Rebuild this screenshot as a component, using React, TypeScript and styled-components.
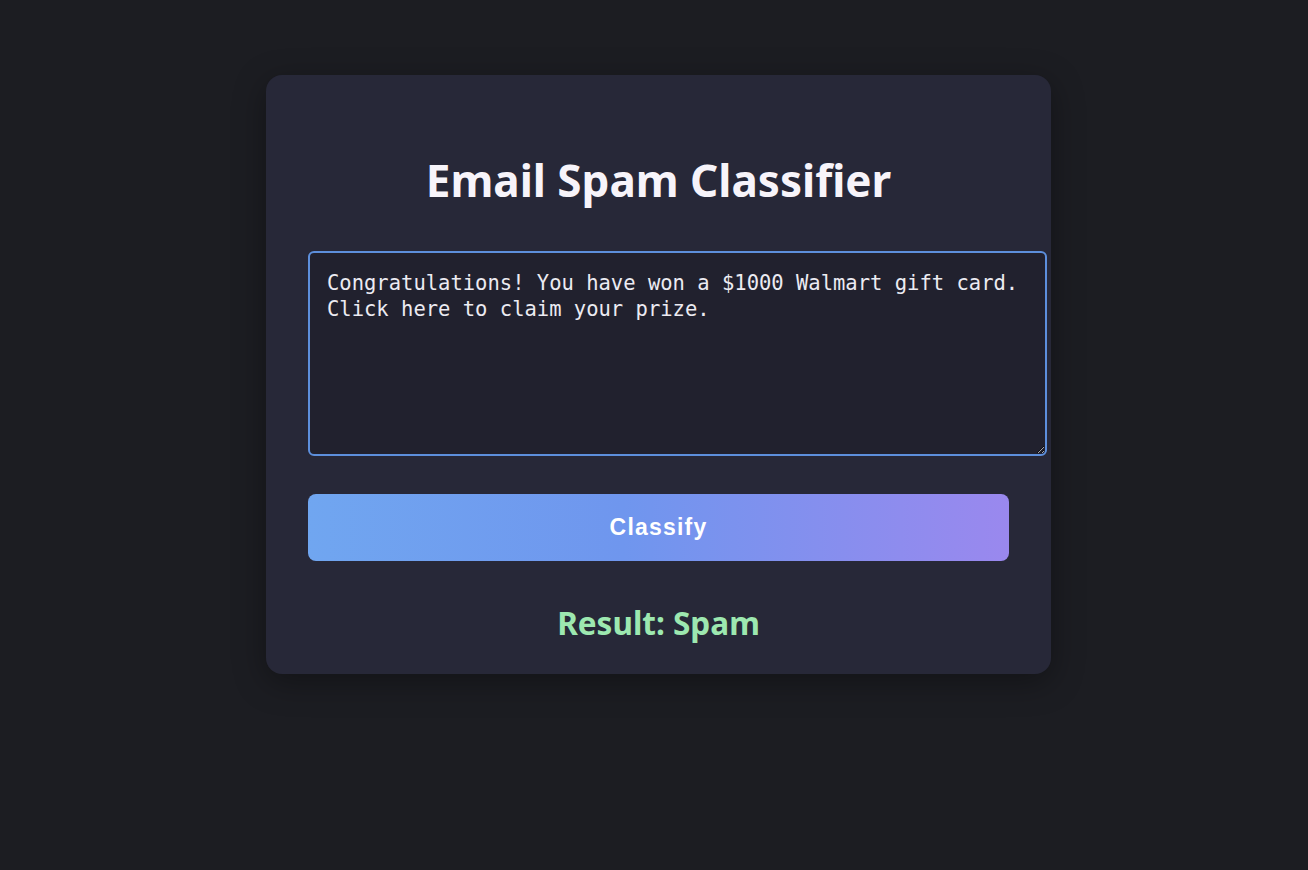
import styled, { createGlobalStyle } from "styled-components";
import { useState } from "react";

const GlobalStyle = createGlobalStyle`
    html, body {
        margin:0;
        padding:0;
        background-color:#1c1d22;
    }
    body {
        min-height:870px;
        font-family:"Noto Sans", "Open Sans", sans-serif;
    }
`

const Page = styled.div`
    display:flex;
    justify-content:center;
    padding:75px 0 0 9px;
`

const Card = styled.div`
    box-sizing:border-box;
    width:785px;
    padding:40px 42px 31px;
    background-color:#272838;
    border-radius:16px;
    box-shadow:0 8px 32px rgba(0, 0, 0, 0.35);
    display:flex;
    flex-direction:column;
    align-items:stretch;
`

const Heading = styled.h1`
    margin:37px 0 42px;
    font-size:44px;
    line-height:57px;
    font-weight:700;
    color:#f7f4fa;
    text-align:center;
`

const EmailInput = styled.textarea`
    box-sizing:content-box;
    width:100%;
    height:167px;
    margin:0;
    padding:17px;
    border:2px solid #5d8fdc;
    border-radius:6px;
    background-color:#21212e;
    color:#ecebf2;
    font-family:"DejaVu Sans Mono", "Liberation Mono", monospace;
    font-size:20.5px;
    line-height:26px;
    outline:none;
    resize:both;
`

const ClassifyBtn = styled.button`
    margin-top:38px;
    height:67px;
    width:100%;
    border:none;
    border-radius:8px;
    background:linear-gradient(90deg, #70a6f0 0%, #6f96ee 45%, #9a88ee 100%);
    color:#ffffff;
    font-family:"Liberation Sans", Arial, sans-serif;
    font-size:23px;
    font-weight:700;
    letter-spacing:1.2px;
    cursor:pointer;
`

const ResultText = styled.p<{ $spam: boolean }>`
    margin:41px 0 0;
    font-size:31.5px;
    line-height:41px;
    font-weight:700;
    text-align:center;
    color:${(p) => (p.$spam ? "#9de8b0" : "#f08a8a")};
`

export default function App(){
    const [email, setEmail] = useState(
        "Congratulations! You have won a $1000 Walmart gift card. Click here to claim your prize."
    )
    const [result, setResult] = useState("Spam")

    function handleClassify(){
        const spammy = /congratulations|won|prize|gift card|click here/i.test(email)
        setResult(spammy ? "Spam" : "Not Spam")
    }

    return(
        <>
            <GlobalStyle />
            <Page>
                <Card>
                    <Heading>Email Spam Classifier</Heading>
                    <EmailInput value={email} onChange={(e) => setEmail(e.target.value)} />
                    <ClassifyBtn onClick={handleClassify}>Classify</ClassifyBtn>
                    <ResultText $spam={result === "Spam"}>Result: {result}</ResultText>
                </Card>
            </Page>
        </>
    )
}
